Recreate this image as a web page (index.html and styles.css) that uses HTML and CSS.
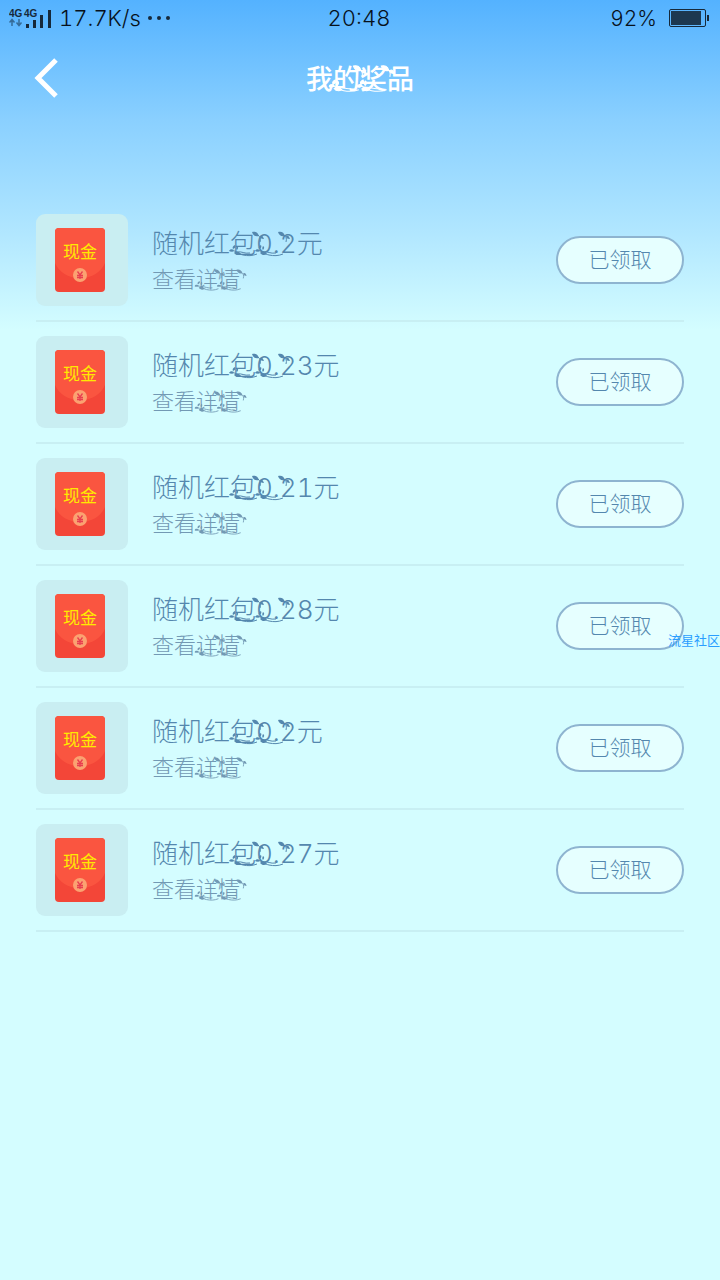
FILE: index.html
```html
<!DOCTYPE html>
<html lang="zh-CN">
<head>
<meta charset="utf-8">
<meta name="viewport" content="width=device-width, initial-scale=1">
<title>我的奖品</title>
<link rel="stylesheet" href="styles.css">
</head>
<body>
<svg class="defs" aria-hidden="true">
  <symbol id="sprig" viewBox="0 0 36 28">
    <path d="M23 1c3-1 6 0 7 4-4 1-6-1-7-4zM31 5c2-1 3 0 4 3-3 0-4-1-4-3z" fill="currentColor"/>
    <path d="M29 4c2 2 3 3 2 7" fill="none" stroke="currentColor" stroke-width="1"/>
    <path d="M0 20c1-2 3-2 5-1-1 2-3 2-5 1zM4 18c-1-2 0-3 2-4 1 2 0 3-2 4zM5 22c2-2 4-2 7 1-3 2-5 1-7-1zM8 19c-1-1-1-2 0-4 2 1 1 3 0 4z" fill="currentColor"/>
    <path d="M3 20c4-1 6 3 11 4 5 1 9 1 14-1M8 21c5-1 7 2 13 1" fill="none" stroke="currentColor" stroke-width="1"/>
  </symbol>
  <symbol id="vine" viewBox="0 0 62 28">
    <use href="#sprig" width="36" height="28"/>
    <use href="#sprig" x="26" width="36" height="28"/>
  </symbol>
  <symbol id="packet" viewBox="0 0 52 66">
    <rect x="1" y="1" width="50" height="64" rx="4" fill="#f34638"/>
    <path d="M1 5a4 4 0 0 1 4-4h42a4 4 0 0 1 4 4v31c-4 9-13 15-25 15S5 45 1 36z" fill="#fa5540"/>
    <circle cx="26" cy="48" r="7" fill="#fba271"/>
    <path d="M23.500 44.500l2.500 3.500 2.500-3.500M26 48v4M23 48.500h6M23 50.500h6" fill="none" stroke="#e93d50" stroke-width="1.300"/>
  </symbol>
</svg>

<header class="top">
  <div class="status">
    <div class="status-left">
      <svg class="signal" viewBox="0 0 44 22" aria-hidden="true">
        <text x="0" y="10" class="net">4G</text><text x="15" y="10" class="net">4G</text>
        <path d="M3 19v-6M0.500 15.500L3 12.500l2.500 3M10 12v6M7.500 15.500L10 18.500l2.500-3" fill="none" stroke="#356b98" stroke-width="1.500"/>
        <path d="M17 17h3v4h-3zM24 13h3v8h-3zM31 8h3v13h-3zM39 3h3v18h-3z" fill="#16293a"/>
      </svg>
      <span>17.7K/s</span>
      <svg class="dots" viewBox="0 0 24 6" aria-hidden="true"><g fill="#16293a"><circle cx="3" cy="3" r="2"/><circle cx="12" cy="3" r="2"/><circle cx="21" cy="3" r="2"/></g></svg>
    </div>
    <time>20:48</time>
    <div class="status-right">
      <span>92%</span>
      <svg class="battery" viewBox="0 0 40 18" aria-hidden="true"><rect x="0.500" y="0.500" width="36" height="17" rx="1.500" fill="none" stroke="#16293a"/><rect x="2" y="2" width="30" height="14" fill="#1d3850"/><path d="M38 6h2v6h-2z" fill="#16293a"/></svg>
    </div>
  </div>
  <nav class="bar">
    <button class="back" type="button" aria-label="返回"><svg viewBox="0 0 24 40" aria-hidden="true"><path d="M22 2L4 20l18 18" fill="none" stroke="#fff" stroke-width="5"/></svg></button>
    <h1 class="vined">我的奖品<svg class="vine" aria-hidden="true"><use href="#vine"/></svg></h1>
  </nav>
</header>

<main>
  <ul class="prizes" id="prizes"></ul>
</main>
<div class="mark">流星社区</div>
<script src="app.js"></script>
</body>
</html>
```
FILE: styles.css
```css
* { box-sizing: border-box; }
body {
  margin: 0;
  min-height: 100vh;
  overflow-x: hidden;
  background: #d4fdff linear-gradient(#54b2ff 0, #8ad0ff 120px, #b0e6ff 230px, #d4fdff 330px) no-repeat;
  font-family: Inter, "Noto Sans CJK SC", sans-serif;
  font-weight: 300;
  font-variant-numeric: tabular-nums;
  color: #5487ae;
}
.defs { position: absolute; width: 0; height: 0; }
.status {
  display: grid;
  grid-template-columns: 1fr auto 1fr;
  align-items: center;
  height: 36px;
  padding: 0 11px 0 9px;
  color: #07111b;
  font-size: 22px;
}
.status-left, .status-right { display: flex; align-items: center; }
.status-left { gap: 6px; }
.status-right { justify-content: flex-end; gap: 12px; font-size: 21px; }
.signal { width: 44px; height: 22px; }
.net { font: bold 10px "Liberation Sans", sans-serif; fill: #16293a; }
.dots { width: 24px; height: 6px; }
.battery { width: 40px; height: 18px; }
.bar {
  display: grid;
  grid-template-columns: 1fr auto 1fr;
  align-items: center;
  height: 84px;
  padding: 0 34px;
}
.back { width: 24px; height: 40px; padding: 0; border: 0; background: none; }
.back svg { display: block; width: 24px; height: 40px; }
.vined { position: relative; }
.vine { position: absolute; overflow: visible; }
h1 { margin: 0; padding-top: 4px; font-size: 27px; line-height: 40px; font-weight: 500; color: #fff; }
h1 .vine { left: 22px; top: 9px; width: 68px; height: 30px; stroke: #fff; stroke-width: 1; }
.prizes { list-style: none; margin: 0; padding: 80px 36px 0; }
.prize {
  display: flex;
  align-items: center;
  gap: 24px;
  height: 122px;
  border-bottom: 2px solid #c8eff3;
}
.thumb {
  display: grid;
  place-items: center;
  width: 92px;
  height: 92px;
  padding-right: 4px;
  border-radius: 9px;
  background: #c9eef2;
}
.packet, .cash { grid-area: 1 / 1; }
.packet { width: 52px; height: 66px; }
.cash { z-index: 1; margin-bottom: 16px; font-size: 17px; line-height: 24px; font-weight: 400; color: #ffea00; }
.info { flex: 1; }
h2 { margin: 0; width: max-content; padding-top: 2px; font-size: 26px; line-height: 36px; font-weight: 300; }
h2 .vine { left: 77px; top: 7px; width: 62px; height: 28px; }
.detail { display: block; width: max-content; font-size: 22px; line-height: 34px; color: #7299b4; text-decoration: none; }
.detail .vine { left: 42px; top: 7px; width: 54px; height: 24px; }
.claimed {
  width: 128px;
  height: 48px;
  padding: 0 0 4px;
  border: 2px solid #8eb4d0;
  border-radius: 24px;
  background: #e6ffff;
  color: #5487ae;
  font: inherit;
  font-size: 21px;
}
.mark { position: absolute; right: 0; top: 630px; font-size: 13px; line-height: 20px; font-weight: 400; color: #2a9dff; }
```
FILE: app.js
```js
const amounts = ["0.2", "0.23", "0.21", "0.28", "0.2", "0.27"];
const vine = '<svg class="vine" aria-hidden="true"><use href="#vine"/></svg>';
document.getElementById("prizes").innerHTML = amounts.map(amount => `
  <li class="prize">
    <div class="thumb"><svg class="packet" aria-hidden="true"><use href="#packet"/></svg><span class="cash">现金</span></div>
    <div class="info">
      <h2 class="vined">随机红包${amount}元${vine}</h2>
      <a class="detail vined" href="#">查看详情${vine}</a>
    </div>
    <button class="claimed" type="button">已领取</button>
  </li>`).join("");
```
